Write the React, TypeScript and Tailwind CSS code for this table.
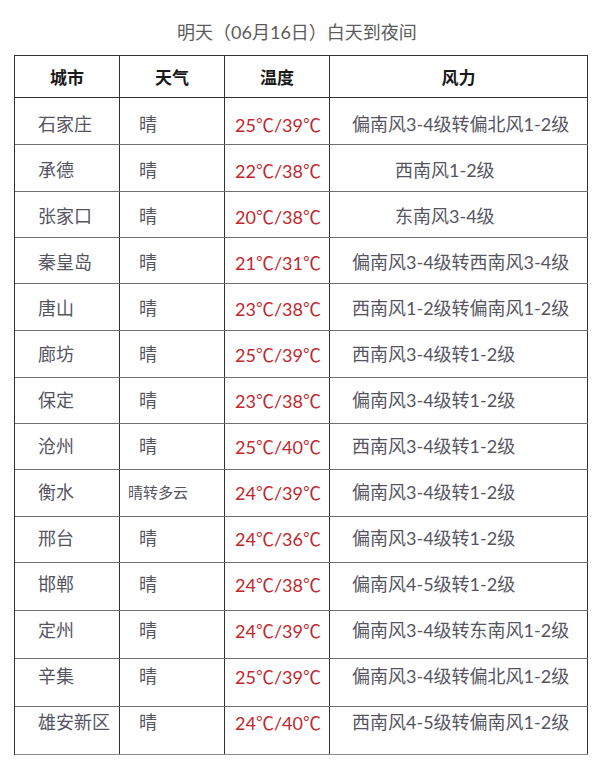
import React from "react";

type Row = {
  city: string;
  weather: string;
  temp: string;
  wind: string;
  h: string;
  pt: string;
  windPl: string;
  small?: boolean;
};

const rows: Row[] = [
  { city: "石家庄", weather: "晴", temp: "25℃/39℃", wind: "偏南风3-4级转偏北风1-2级", h: "h-[47px]", pt: "pt-[14px]", windPl: "pl-[22px]" },
  { city: "承德", weather: "晴", temp: "22℃/38℃", wind: "西南风1-2级", h: "h-[47px]", pt: "pt-[13px]", windPl: "pl-[65px]" },
  { city: "张家口", weather: "晴", temp: "20℃/38℃", wind: "东南风3-4级", h: "h-[46px]", pt: "pt-[12px]", windPl: "pl-[65px]" },
  { city: "秦皇岛", weather: "晴", temp: "21℃/31℃", wind: "偏南风3-4级转西南风3-4级", h: "h-[46px]", pt: "pt-[12px]", windPl: "pl-[22px]" },
  { city: "唐山", weather: "晴", temp: "23℃/38℃", wind: "西南风1-2级转偏南风1-2级", h: "h-[47px]", pt: "pt-[12px]", windPl: "pl-[22px]" },
  { city: "廊坊", weather: "晴", temp: "25℃/39℃", wind: "西南风3-4级转1-2级", h: "h-[47px]", pt: "pt-[11px]", windPl: "pl-[22px]" },
  { city: "保定", weather: "晴", temp: "23℃/38℃", wind: "偏南风3-4级转1-2级", h: "h-[46px]", pt: "pt-[10px]", windPl: "pl-[22px]" },
  { city: "沧州", weather: "晴", temp: "25℃/40℃", wind: "西南风3-4级转1-2级", h: "h-[46px]", pt: "pt-[10px]", windPl: "pl-[22px]" },
  { city: "衡水", weather: "晴转多云", temp: "24℃/39℃", wind: "偏南风3-4级转1-2级", h: "h-[47px]", pt: "pt-[10px]", windPl: "pl-[22px]", small: true },
  { city: "邢台", weather: "晴", temp: "24℃/36℃", wind: "偏南风3-4级转1-2级", h: "h-[46px]", pt: "pt-[9px]", windPl: "pl-[22px]" },
  { city: "邯郸", weather: "晴", temp: "24℃/38℃", wind: "偏南风4-5级转1-2级", h: "h-[48px]", pt: "pt-[9px]", windPl: "pl-[22px]" },
  { city: "定州", weather: "晴", temp: "24℃/39℃", wind: "偏南风3-4级转东南风1-2级", h: "h-[48px]", pt: "pt-[7px]", windPl: "pl-[22px]" },
  { city: "辛集", weather: "晴", temp: "25℃/39℃", wind: "偏南风3-4级转偏北风1-2级", h: "h-[48px]", pt: "pt-[5px]", windPl: "pl-[22px]" },
  { city: "雄安新区", weather: "晴", temp: "24℃/40℃", wind: "西南风4-5级转偏南风1-2级", h: "h-[48px]", pt: "pt-[3px]", windPl: "pl-[22px]" },
];

function Temp({ value }: { value: string }) {
  const parts = value.split("℃");
  return (
    <>
      {parts.map((p, i) => (
        <React.Fragment key={i}>
          {p}
          {i < parts.length - 1 && (
            <span className="font-['Noto_Sans_CJK_SC',sans-serif]">℃</span>
          )}
        </React.Fragment>
      ))}
    </>
  );
}

export default function App() {
  return (
    <div className="w-[600px] h-[775px] bg-white font-['Lato','Noto_Sans_CJK_SC',sans-serif] overflow-hidden">
      <div className="h-[55px] pt-[20px] pr-[6px] text-center text-[18px] leading-6 text-[#5c5c5c]">
        明天（06月16日）白天到夜间
      </div>
      <div className="ml-[14px] w-[574px] border-l border-t border-[#333]">
        <div className="grid grid-cols-[105px_105px_105px_258px] h-[42px] border-b border-[#333] text-[17px] leading-6 font-bold text-[#1a1a1a]">
          <div className="border-r border-[#333] pt-[10px] text-center">城市</div>
          <div className="border-r border-[#333] pt-[10px] text-center">天气</div>
          <div className="border-r border-[#333] pt-[10px] text-center">温度</div>
          <div className="border-r border-[#333] pt-[10px] text-center">风力</div>
        </div>
        {rows.map((r, i) => (
          <div
            key={i}
            className={`grid grid-cols-[105px_105px_105px_258px] ${r.h} border-b ${
              i === rows.length - 1 ? "border-[#8a8a8a]" : "border-[#6f6f6f]"
            } text-[18px] leading-6 text-[#55555f]`}
          >
            <div className={`border-r border-[#333] pl-[23px] whitespace-nowrap ${r.pt}`}>{r.city}</div>
            <div
              className={`border-r border-[#333] whitespace-nowrap ${r.pt} ${
                r.small ? "pl-[8px] text-[15px]" : "pl-[19px]"
              }`}
            >
              {r.weather}
            </div>
            <div className={`border-r border-[#333] pl-[10px] whitespace-nowrap text-[#c1272d] ${r.pt}`}>
              <Temp value={r.temp} />
            </div>
            <div className={`border-r border-[#333] whitespace-nowrap ${r.windPl} ${r.pt}`}>{r.wind}</div>
          </div>
        ))}
      </div>
    </div>
  );
}
